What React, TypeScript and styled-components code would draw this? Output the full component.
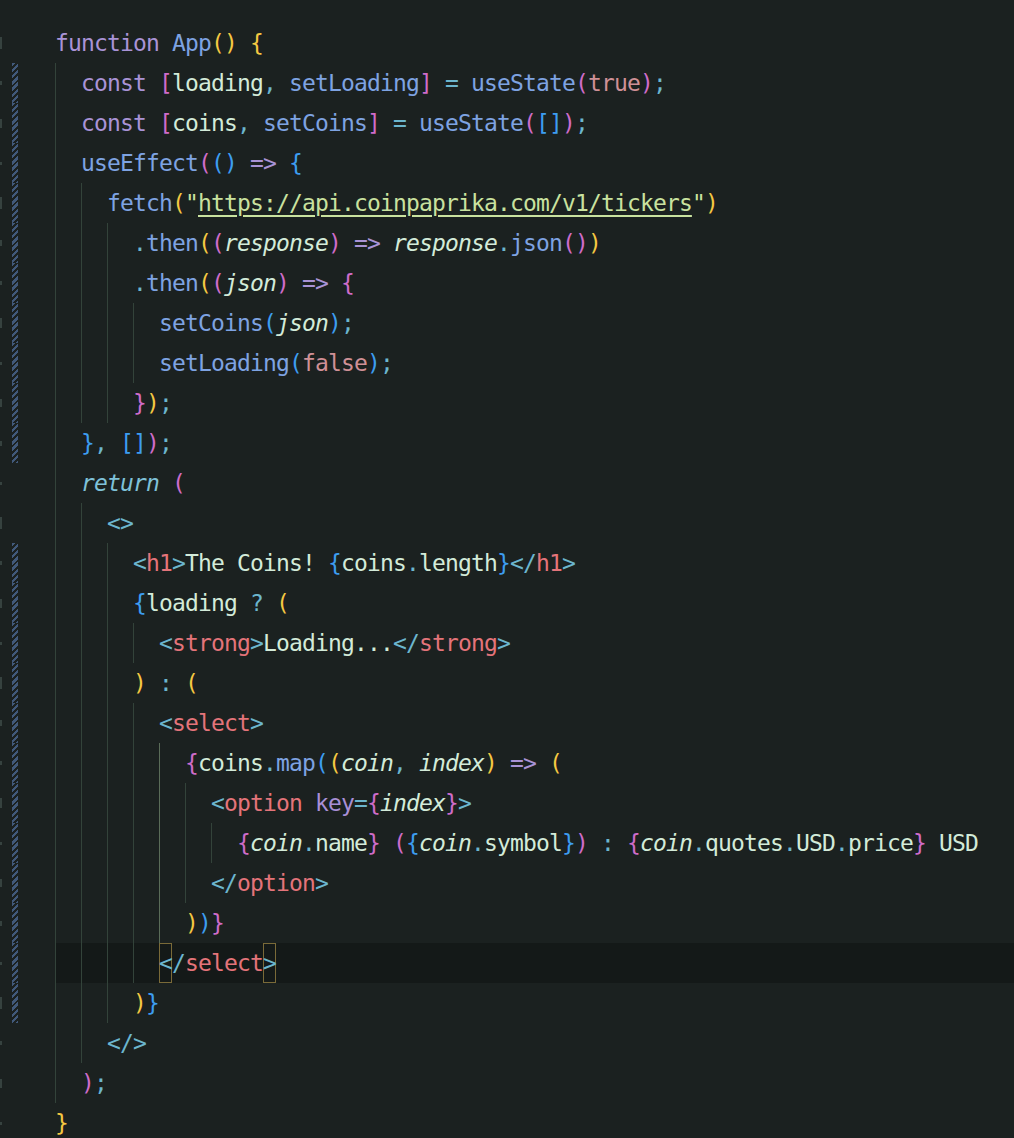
import React from "react";
import styled, { createGlobalStyle, css } from "styled-components";

const Global = createGlobalStyle`
  html, body {
    margin: 0;
    padding: 0;
    background: #1b2120;
    overflow: hidden;
  }
  #root { min-height: 1138px; }
`;

type Kind =
  | "kw" | "fn" | "tx" | "it" | "pu" | "rt" | "bo" | "st" | "url"
  | "tg" | "at" | "b1" | "b2" | "b3" | "mt";

type Tok = [Kind, string];

interface Line {
  indent: number;
  toks: Tok[];
  change?: boolean;
  current?: boolean;
}

const palette: Record<Kind, string> = {
  kw: "#a993d6",
  fn: "#7ea3e2",
  tx: "#d3ebd9",
  it: "#d3ebd9",
  pu: "#6cb6ce",
  rt: "#7fc2d9",
  bo: "#cf9096",
  st: "#c9e29f",
  url: "#c9e29f",
  tg: "#e4747a",
  at: "#a88fd6",
  b1: "#f5c842",
  b2: "#cf6cc9",
  b3: "#3d9df0",
  mt: "#6cb6ce",
};

const Editor = styled.main`
  padding-top: 23px;
  display: flex;
  flex-direction: column;
  font-family: "DejaVu Sans Mono", "Liberation Mono", monospace;
  font-size: 23px;
  letter-spacing: -0.85px;
`;

const Row = styled.div`
  display: flex;
  height: 40px;
`;

const Gutter = styled.div`
  width: 55px;
  flex: none;
  display: flex;
  align-items: stretch;
  gap: 9px;
`;

/* right edge of the (cropped) line-number column */
const NumEdge = styled.div`
  width: 3px;
  display: flex;
  align-items: center;
`;

const NumMark = styled.span<{ $h: number }>`
  display: block;
  width: 2px;
  height: ${(p) => p.$h}px;
  background: #36423f;
`;

const ChangeBar = styled.div<{ $on: boolean }>`
  width: 6px;
  ${(p) =>
    p.$on &&
    css`
      background: repeating-linear-gradient(
        135deg,
        #41597a 0px,
        #41597a 2.4px,
        transparent 2.4px,
        transparent 4.4px
      );
    `}
`;

const Code = styled.div<{ $current: boolean }>`
  flex: 1;
  display: flex;
  align-items: stretch;
  white-space: pre;
  line-height: 40px;
  background: ${(p) => (p.$current ? "#141918" : "transparent")};
`;

const Guide = styled.span<{ $active: boolean }>`
  display: inline-block;
  box-sizing: border-box;
  width: 26px;
  flex: none;
  border-left: 1px solid ${(p) => (p.$active ? "#5a6c58" : "#33433a")};
`;

const Token = styled.span<{ $kind: Kind }>`
  display: inline-block;
  height: 40px;
  color: ${(p) => palette[p.$kind]};
  font-style: ${(p) => (p.$kind === "it" || p.$kind === "rt" ? "italic" : "normal")};
  ${(p) =>
    p.$kind === "url" &&
    css`
      text-decoration: underline;
      text-decoration-thickness: 2px;
      text-underline-offset: 4px;
    `}
  ${(p) =>
    p.$kind === "mt" &&
    css`
      box-shadow: inset 0 0 0 1px #7a6a38;
    `}
`;

const S: Tok = ["tx", " "];

const lines: Line[] = [
  { indent: 0, toks: [["kw", "function"], S, ["fn", "App"], ["b1", "("], ["b1", ")"], S, ["b1", "{"]] },
  {
    indent: 1,
    change: true,
    toks: [
      ["kw", "const"], S, ["b2", "["], ["tx", "loading"], ["pu", ","], S, ["fn", "setLoading"], ["b2", "]"], S,
      ["pu", "="], S, ["fn", "useState"], ["b2", "("], ["bo", "true"], ["b2", ")"], ["pu", ";"],
    ],
  },
  {
    indent: 1,
    change: true,
    toks: [
      ["kw", "const"], S, ["b2", "["], ["tx", "coins"], ["pu", ","], S, ["fn", "setCoins"], ["b2", "]"], S,
      ["pu", "="], S, ["fn", "useState"], ["b2", "("], ["b3", "["], ["b3", "]"], ["b2", ")"], ["pu", ";"],
    ],
  },
  {
    indent: 1,
    change: true,
    toks: [["fn", "useEffect"], ["b2", "("], ["b3", "("], ["b3", ")"], S, ["kw", "=>"], S, ["b3", "{"]],
  },
  {
    indent: 2,
    change: true,
    toks: [
      ["fn", "fetch"], ["b1", "("], ["st", "\""], ["url", "https://api.coinpaprika.com/v1/tickers"], ["st", "\""], ["b1", ")"],
    ],
  },
  {
    indent: 3,
    change: true,
    toks: [
      ["pu", "."], ["fn", "then"], ["b1", "("], ["b2", "("], ["it", "response"], ["b2", ")"], S, ["kw", "=>"], S,
      ["it", "response"], ["pu", "."], ["fn", "json"], ["b2", "("], ["b2", ")"], ["b1", ")"],
    ],
  },
  {
    indent: 3,
    change: true,
    toks: [["pu", "."], ["fn", "then"], ["b1", "("], ["b2", "("], ["it", "json"], ["b2", ")"], S, ["kw", "=>"], S, ["b2", "{"]],
  },
  { indent: 4, change: true, toks: [["fn", "setCoins"], ["b3", "("], ["it", "json"], ["b3", ")"], ["pu", ";"]] },
  { indent: 4, change: true, toks: [["fn", "setLoading"], ["b3", "("], ["bo", "false"], ["b3", ")"], ["pu", ";"]] },
  { indent: 3, change: true, toks: [["b2", "}"], ["b1", ")"], ["pu", ";"]] },
  { indent: 1, change: true, toks: [["b3", "}"], ["pu", ","], S, ["b3", "["], ["b3", "]"], ["b2", ")"], ["pu", ";"]] },
  { indent: 1, toks: [["rt", "return"], S, ["b2", "("]] },
  { indent: 2, toks: [["pu", "<>"]] },
  {
    indent: 3,
    change: true,
    toks: [
      ["pu", "<"], ["tg", "h1"], ["pu", ">"], ["tx", "The Coins! "], ["b3", "{"], ["tx", "coins"], ["pu", "."],
      ["tx", "length"], ["b3", "}"], ["pu", "</"], ["tg", "h1"], ["pu", ">"],
    ],
  },
  { indent: 3, change: true, toks: [["b3", "{"], ["tx", "loading"], S, ["pu", "?"], S, ["b1", "("]] },
  {
    indent: 4,
    change: true,
    toks: [["pu", "<"], ["tg", "strong"], ["pu", ">"], ["tx", "Loading..."], ["pu", "</"], ["tg", "strong"], ["pu", ">"]],
  },
  { indent: 3, change: true, toks: [["b1", ")"], S, ["pu", ":"], S, ["b1", "("]] },
  { indent: 4, change: true, toks: [["pu", "<"], ["tg", "select"], ["pu", ">"]] },
  {
    indent: 5,
    change: true,
    toks: [
      ["b2", "{"], ["tx", "coins"], ["pu", "."], ["fn", "map"], ["b3", "("], ["b1", "("], ["it", "coin"], ["pu", ","], S,
      ["it", "index"], ["b1", ")"], S, ["kw", "=>"], S, ["b1", "("],
    ],
  },
  {
    indent: 6,
    change: true,
    toks: [["pu", "<"], ["tg", "option"], S, ["at", "key"], ["pu", "="], ["b2", "{"], ["it", "index"], ["b2", "}"], ["pu", ">"]],
  },
  {
    indent: 7,
    change: true,
    toks: [
      ["b2", "{"], ["it", "coin"], ["pu", "."], ["tx", "name"], ["b2", "}"], S, ["b2", "("], ["b3", "{"], ["it", "coin"],
      ["pu", "."], ["tx", "symbol"], ["b3", "}"], ["b2", ")"], S, ["pu", ":"], S, ["b2", "{"], ["it", "coin"], ["pu", "."],
      ["tx", "quotes"], ["pu", "."], ["tx", "USD"], ["pu", "."], ["tx", "price"], ["b2", "}"], ["tx", " USD"],
    ],
  },
  { indent: 6, change: true, toks: [["pu", "</"], ["tg", "option"], ["pu", ">"]] },
  { indent: 5, change: true, toks: [["b1", ")"], ["b3", ")"], ["b2", "}"]] },
  { indent: 4, change: true, current: true, toks: [["mt", "<"], ["pu", "/"], ["tg", "select"], ["mt", ">"]] },
  { indent: 3, change: true, toks: [["b1", ")"], ["b3", "}"]] },
  { indent: 2, toks: [["pu", "</>"]] },
  { indent: 1, toks: [["b2", ")"], ["pu", ";"]] },
  { indent: 0, toks: [["b1", "}"]] },
];

// heights of the visible sliver of each cropped line number
const markHeights = [12, 4, 9, 3, 12, 6, 4, 10, 3, 8, 5, 3, 12, 4, 9, 3, 12, 6, 4, 10, 3, 8, 5, 3, 12, 4, 9, 3];

// active indent guide: level 4 on lines 19–23 (0-based 18–22)
const isActiveGuide = (lineIdx: number, level: number) => level === 4 && lineIdx >= 18 && lineIdx <= 22;

export default function App() {
  return (
    <>
      <Global />
      <Editor>
        {lines.map((line, i) => (
          <Row key={i}>
            <Gutter>
              <NumEdge>
                <NumMark $h={markHeights[i]} />
              </NumEdge>
              <ChangeBar $on={!!line.change} />
            </Gutter>
            <Code $current={!!line.current}>
              {Array.from({ length: line.indent }, (_, k) => (
                <Guide key={`g${k}`} $active={isActiveGuide(i, k)} />
              ))}
              {line.toks.map(([kind, text], j) => (
                <Token key={j} $kind={kind}>
                  {text}
                </Token>
              ))}
            </Code>
          </Row>
        ))}
      </Editor>
    </>
  );
}
